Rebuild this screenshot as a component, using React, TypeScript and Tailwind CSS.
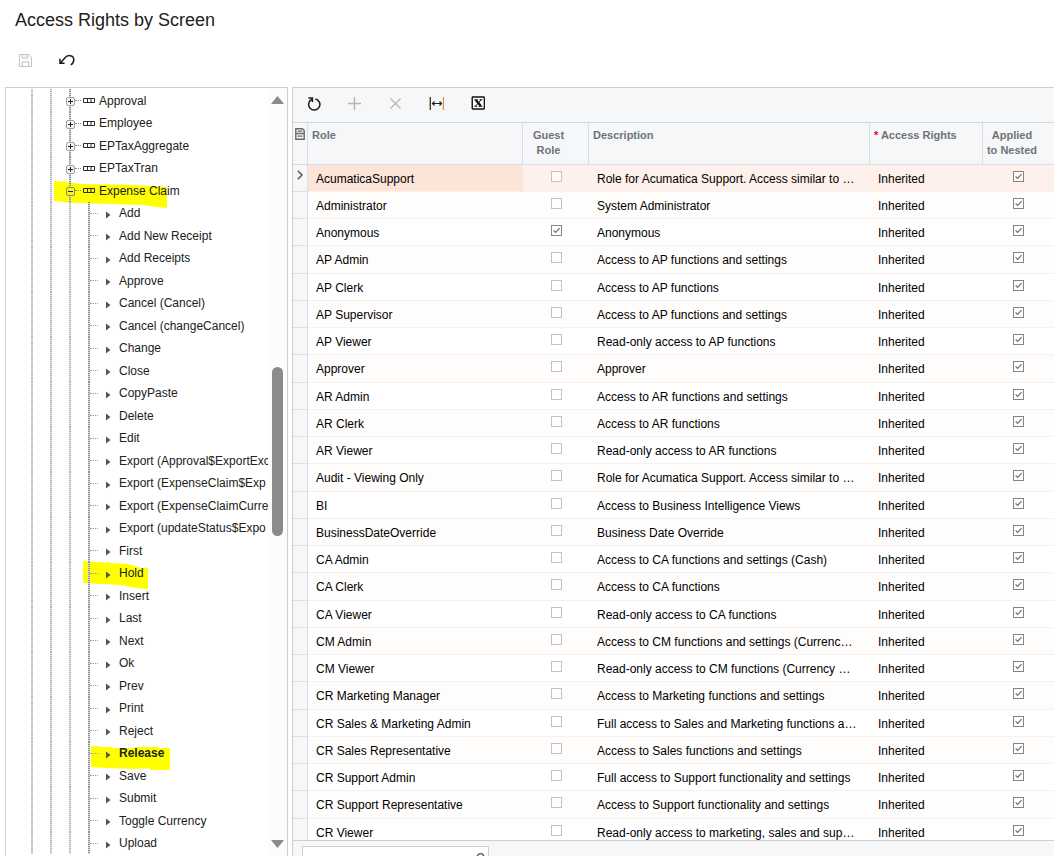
import React from 'react';

interface TreeItem {
  label: string;
  bold?: boolean;
}

interface RoleRow {
  role: string;
  guest?: boolean;
  description: string;
}

const SCREENS: string[] = ['Approval', 'Employee', 'EPTaxAggregate', 'EPTaxTran', 'Expense Claim'];

const ACTIONS: TreeItem[] = [
  { label: 'Add' },
  { label: 'Add New Receipt' },
  { label: 'Add Receipts' },
  { label: 'Approve' },
  { label: 'Cancel (Cancel)' },
  { label: 'Cancel (changeCancel)' },
  { label: 'Change' },
  { label: 'Close' },
  { label: 'CopyPaste' },
  { label: 'Delete' },
  { label: 'Edit' },
  { label: 'Export (Approval$ExportExc' },
  { label: 'Export (ExpenseClaim$Exp' },
  { label: 'Export (ExpenseClaimCurre' },
  { label: 'Export (updateStatus$Expo' },
  { label: 'First' },
  { label: 'Hold' },
  { label: 'Insert' },
  { label: 'Last' },
  { label: 'Next' },
  { label: 'Ok' },
  { label: 'Prev' },
  { label: 'Print' },
  { label: 'Reject' },
  { label: 'Release', bold: true },
  { label: 'Save' },
  { label: 'Submit' },
  { label: 'Toggle Currency' },
  { label: 'Upload' },
];

const ROLES: RoleRow[] = [
  { role: 'AcumaticaSupport', description: 'Role for Acumatica Support. Access similar to …' },
  { role: 'Administrator', description: 'System Administrator' },
  { role: 'Anonymous', guest: true, description: 'Anonymous' },
  { role: 'AP Admin', description: 'Access to AP functions and settings' },
  { role: 'AP Clerk', description: 'Access to AP functions' },
  { role: 'AP Supervisor', description: 'Access to AP functions and settings' },
  { role: 'AP Viewer', description: 'Read-only access to AP functions' },
  { role: 'Approver', description: 'Approver' },
  { role: 'AR Admin', description: 'Access to AR functions and settings' },
  { role: 'AR Clerk', description: 'Access to AR functions' },
  { role: 'AR Viewer', description: 'Read-only access to AR functions' },
  { role: 'Audit - Viewing Only', description: 'Role for Acumatica Support. Access similar to …' },
  { role: 'BI', description: 'Access to Business Intelligence Views' },
  { role: 'BusinessDateOverride', description: 'Business Date Override' },
  { role: 'CA Admin', description: 'Access to CA functions and settings (Cash)' },
  { role: 'CA Clerk', description: 'Access to CA functions' },
  { role: 'CA Viewer', description: 'Read-only access to CA functions' },
  { role: 'CM Admin', description: 'Access to CM functions and settings (Currenc…' },
  { role: 'CM Viewer', description: 'Read-only access to CM functions (Currency …' },
  { role: 'CR Marketing Manager', description: 'Access to Marketing functions and settings' },
  { role: 'CR Sales & Marketing Admin', description: 'Full access to Sales and Marketing functions a…' },
  { role: 'CR Sales Representative', description: 'Access to Sales functions and settings' },
  { role: 'CR Support Admin', description: 'Full access to Support functionality and settings' },
  { role: 'CR Support Representative', description: 'Access to Support functionality and settings' },
  { role: 'CR Viewer', description: 'Read-only access to marketing, sales and sup…' },
];

// Marker strokes behind the highlighted tree nodes, relative to the row's top left corner
const MARKERS: Record<string, { left: string; path: string }> = {
  'Expense Claim': {
    left: 'left-[48px]',
    path: 'M0 2 L14 3 L26 5 L78 6 L113 8 L113 29 L103 28 L88 26 L60 25 L20 24 L0 22 Z',
  },
  Hold: {
    left: 'left-[77px]',
    path: 'M0 -1 L30 1 L45 2 L58 6 L65 6 L65 27 L52 26 L38 23 L0 21 Z',
  },
  Release: {
    left: 'left-[85px]',
    path: 'M0 4 L8 4 L10 5 L20 5 L22 6 L42 6 L46 5 L66 5 L68 6 L79 6 L79 28 L60 28 L58 26 L44 27 L14 26 L0 25 Z',
  },
};

function Marker({ label }: { label: string }) {
  const marker = MARKERS[label];
  if (!marker) return null;
  return (
    <svg className={`absolute top-0 -z-10 overflow-visible ${marker.left}`} width="120" height="28" aria-hidden="true">
      <path d={marker.path} fill="#ffff00" />
    </svg>
  );
}

// Dotted vertical guide of one indent level
function Guide() {
  return (
    <span className="w-[19px] shrink-0 self-stretch">
      <span className="block h-full w-[2px] bg-[repeating-linear-gradient(to_bottom,#b4b4b4_0_1px,#e6e6e6_1px_2px)]" />
    </span>
  );
}

function ToggleIcon({ open }: { open: boolean }) {
  return (
    <svg width="9" height="9" viewBox="0 0 9 9" aria-hidden="true">
      <rect x=".5" y=".5" width="8" height="8" rx="1.5" fill={open ? '#f3f335' : '#f4f4f4'} stroke={open ? '#8f8f3c' : '#a0a0a0'} />
      <path d={open ? 'M2 4.5H7' : 'M2 4.5H7M4.5 2V7'} stroke="#222" strokeWidth="1" />
    </svg>
  );
}

function TableIcon() {
  return (
    <svg width="12" height="5" viewBox="0 0 12 5" aria-hidden="true">
      <path d="M.5 .5H11.5V4.5H.5ZM4.5 .5V4.5M8 .5V4.5" fill="none" stroke="#2c2c2c" />
    </svg>
  );
}

function ToolButton({ label, disabled, children }: { label: string; disabled?: boolean; children: React.ReactNode }) {
  return (
    <button type="button" aria-label={label} disabled={disabled} className="flex h-6 w-[41px] shrink-0 items-center justify-center">
      {children}
    </button>
  );
}

function CheckBox({ checked, label }: { checked?: boolean; label: string }) {
  return (
    <span className="relative mx-auto block size-[11px]">
      <input
        type="checkbox"
        aria-label={label}
        defaultChecked={checked}
        className="peer block size-[11px] appearance-none border border-[#c2c2c2] bg-white/60 checked:border-[#858585]"
      />
      <svg className="pointer-events-none absolute inset-0 hidden peer-checked:block" width="11" height="11" viewBox="0 0 11 11">
        <path d="M2.6 5.4L4.6 7.4L8.6 3.2" fill="none" stroke="#6e6e6e" strokeWidth="1.2" />
      </svg>
    </span>
  );
}

function Tree() {
  return (
    <nav aria-label="Screens" className="relative flex w-[283px] shrink-0 overflow-hidden border border-b-0 border-[#cfcfcf]">
      <ul className="isolate w-[262px] shrink-0 overflow-hidden pt-px text-xs text-[#212121]">
        {SCREENS.map((label, i) => (
          <li key={label} className="relative flex h-[22px] items-center pl-[25px] odd:h-[23px]">
            <Marker label={label} />
            <Guide />
            <Guide />
            <span className="relative flex w-[14px] shrink-0 items-center gap-1 self-stretch">
              <span className="h-full w-[2px] bg-[repeating-linear-gradient(to_bottom,#959595_0_1px,#d4d4d4_1px_2px)]" />
              <span className="w-[6px] border-t border-dotted border-[#8a8a8a]" />
              <span className="absolute top-2 -left-[3px]">
                <ToggleIcon open={i === SCREENS.length - 1} />
              </span>
            </span>
            <a href="#screen" className="flex items-center gap-1 whitespace-nowrap">
              <TableIcon />
              {label}
            </a>
          </li>
        ))}
        {ACTIONS.map(({ label, bold }) => (
          <li key={label} className="relative flex h-[23px] items-center pl-[25px] even:h-[22px]">
            <Marker label={label} />
            <Guide />
            <Guide />
            <Guide />
            <span className="w-[2px] shrink-0 self-stretch bg-[repeating-linear-gradient(to_bottom,#959595_0_1px,#d4d4d4_1px_2px)]" />
            <span className="w-2 shrink-0 border-t border-dotted border-[#9a9a9a]" />
            <svg className="mt-[3px] mr-2 ml-2 shrink-0" width="5" height="8" viewBox="0 0 5 8" aria-hidden="true">
              <path d="M0 .5L4.5 4L0 7.5Z" fill="#555" />
            </svg>
            <a href="#action" className={`whitespace-nowrap ${bold ? 'font-bold' : ''}`}>
              {label}
            </a>
          </li>
        ))}
      </ul>
      {/* Scroll bar */}
      <div className="flex flex-1 flex-col items-center bg-[#fcfcfc] pt-2 pb-2">
        <svg width="13" height="8" viewBox="0 0 13 8" aria-hidden="true">
          <path d="M0 8L6.5 0L13 8Z" fill="#8b8b8b" />
        </svg>
        <div className="grow-[263]" />
        <div className="w-[11px] grow-[169] rounded-full bg-[#8b8b8b]" />
        <div className="grow-[304]" />
        <svg width="13" height="8" viewBox="0 0 13 8" aria-hidden="true">
          <path d="M0 0L6.5 8L13 0Z" fill="#8b8b8b" />
        </svg>
      </div>
    </nav>
  );
}

function RolesTable() {
  const head = 'border-r border-b border-[#d9dce0] pt-[5px] align-top font-bold';
  const cell = 'border-b border-[#f8f0ec] pt-[6px] align-top';
  return (
    <table className="w-full table-fixed border-separate border-spacing-0 text-left text-xs text-black">
      <colgroup>
        <col className="w-[15px]" />
        <col className="w-[215px]" />
        <col className="w-[66px]" />
        <col />
        <col className="w-[113px]" />
        <col className="w-[71px]" />
      </colgroup>
      <thead className="bg-[#f5f7f9] text-[11px] leading-[15px] text-[#6f7377]">
        <tr className="h-[42px]">
          <th className={head} aria-label="Notes">
            <svg className="ml-[2px]" width="10" height="12" viewBox="0 0 10 12" fill="none" stroke="#6a6a6a" aria-hidden="true">
              <path d="M.8 5V.8H7.5L9.2 2.5V5M.8 6V11.2H9.2V6" strokeWidth="1.4" />
              <path d="M2.5 3.2H7.5M0 5.5H10M2.5 8.2H7.5" strokeWidth="1.3" />
            </svg>
          </th>
          <th className={`${head} pl-1`}>Role</th>
          <th className={`${head} pr-[14px] text-center`}>Guest Role</th>
          <th className={`${head} pl-1`}>Description</th>
          <th className={`${head} pl-1`}>
            <span className="text-red-600">*</span> Access Rights
          </th>
          <th className="border-b border-[#d9dce0] pt-[5px] pr-[13px] text-center align-top font-bold whitespace-nowrap">
            Applied
            <br />
            to Nested
          </th>
        </tr>
      </thead>
      <tbody>
        {ROLES.map((row, i) => (
          <tr
            key={row.role}
            className={`h-[27px] nth-[4n]:h-[28px] ${i === 0 ? 'bg-[#fef0ea]' : i % 2 ? 'bg-[#fffdfb]' : 'bg-white'}`}
          >
            <td className="border-r border-b border-[#dcdfe3] bg-[#f5f7f9] pt-[5px] align-top">
              {i === 0 && (
                <svg className="ml-1" width="6" height="10" viewBox="0 0 6 10" aria-hidden="true">
                  <path d="M.8 .8L5 5L.8 9.2" fill="none" stroke="#555" strokeWidth="1.5" />
                </svg>
              )}
            </td>
            <td className={`${cell} truncate pl-2 ${i === 0 ? 'bg-[#fce4d8]' : ''}`}>{row.role}</td>
            <td className={cell}>
              <CheckBox checked={row.guest} label={`Guest role: ${row.role}`} />
            </td>
            <td className={`${cell} truncate pl-2`}>{row.description}</td>
            <td className={`${cell} pl-2`}>Inherited</td>
            <td className={cell}>
              <CheckBox checked label={`Applied to nested: ${row.role}`} />
            </td>
          </tr>
        ))}
      </tbody>
    </table>
  );
}

export default function App() {
  return (
    <div className="flex h-screen flex-col overflow-hidden bg-white font-['Liberation_Sans',Arial,sans-serif] text-[#212121]">
      <header className="shrink-0">
        <h1 className="pt-2 pl-[15px] text-lg leading-6">Access Rights by Screen</h1>
        <div className="flex pt-4 pb-[15px] pl-[5px]">
          <ToolButton label="Save" disabled>
            <svg width="13" height="13" viewBox="0 0 14 14" fill="none" stroke="#bdbdbd" aria-hidden="true">
              <path d="M.5 .5H10.5L13.5 3.5V13.5H.5ZM3.5 .5V4.5H9.5V.5M3.5 13.5V8.5H10.5V13.5M7.5 1.5V3.5" />
            </svg>
          </ToolButton>
          <ToolButton label="Cancel">
            <svg width="16" height="12" viewBox="0 0 16 12" fill="none" stroke="#1c1c1c" strokeWidth="1.5" aria-hidden="true">
              <path d="M1 4.8V9.3H5.6M1.4 8.9L6 3.8C8.6 .4 14.8 .8 14.8 5.8C14.8 8 13.6 9.8 11.8 11" />
            </svg>
          </ToolButton>
        </div>
      </header>

      <main className="flex min-h-0 flex-1 gap-1 pl-[5px]">
        <Tree />
        <section className="flex min-w-0 flex-1 flex-col border-t border-l border-[#cfcfcf]">
          <div className="flex h-[35px] shrink-0 items-center border-b border-[#d5d8db] bg-[#f5f7f9] pb-1">
            <ToolButton label="Refresh">
              <svg width="14" height="15" viewBox="0 0 14 15" fill="none" stroke="#1c1c1c" strokeWidth="1.5" aria-hidden="true">
                <path d="M8.4 2.9A5.6 5.6 0 1 1 4.9 3.3" />
                <path d="M1.4 2H5.4V6" />
              </svg>
            </ToolButton>
            <ToolButton label="Add Row" disabled>
              <svg width="13" height="13" viewBox="0 0 13 13" stroke="#b5b7b9" strokeWidth="1.4" aria-hidden="true">
                <path d="M6.5 0V13M0 6.5H13" />
              </svg>
            </ToolButton>
            <ToolButton label="Delete Row" disabled>
              <svg width="11" height="11" viewBox="0 0 11 11" stroke="#b5b7b9" strokeWidth="1.3" aria-hidden="true">
                <path d="M.5 .5L10.5 10.5M10.5 .5L.5 10.5" />
              </svg>
            </ToolButton>
            <ToolButton label="Fit to Screen">
              <svg width="15" height="13" viewBox="0 0 15 13" fill="none" aria-hidden="true">
                <path d="M.5 0V13" stroke="#e0a862" />
                <path d="M1.5 0V13" stroke="#24404e" />
                <path d="M14.5 0V13" stroke="#d9913a" strokeWidth="1.4" />
                <path d="M3.5 6.5H12.5M5.5 4.5L3.5 6.5L5.5 8.5M10.5 4.5L12.5 6.5L10.5 8.5" stroke="#222" strokeWidth="1.2" />
              </svg>
            </ToolButton>
            <ToolButton label="Export to Excel">
              <svg width="14" height="14" viewBox="0 0 14 14" fill="none" stroke="#111" aria-hidden="true">
                <path d="M.4 1V13" stroke="#e6b877" strokeWidth=".8" />
                <rect x="1.3" y="1" width="12" height="12" rx=".5" fill="#fff" strokeWidth="1.3" />
                <path d="M4.8 4L9.8 10" strokeWidth="2.4" />
                <path d="M10.1 3.8L4.5 10.2M3.3 3.8H6.9M8.5 3.8H11.3M3.3 10.3H6.1M7.7 10.3H11.3" strokeWidth="1" />
              </svg>
            </ToolButton>
          </div>
          <div className="min-h-0 flex-1 overflow-hidden">
            <RolesTable />
          </div>
          {/* Filter bar */}
          <footer className="h-4 shrink-0 overflow-hidden border-t border-[#cfcfcf] bg-[#f5f7f9] pt-[5px] pl-[9px]">
            <div className="flex h-6 w-[187px] border border-[#cfcfcf] bg-white">
              <input type="text" aria-label="Search" className="min-w-0 flex-1 px-2 text-xs outline-none" />
              <svg className="mt-[6px] mr-[3px]" width="9" height="12" viewBox="0 0 9 12" fill="none" stroke="#555" strokeWidth="1.3" aria-hidden="true">
                <circle cx="4.5" cy="4" r="3.3" />
                <path d="M2.5 7L.5 10.5" />
              </svg>
            </div>
          </footer>
        </section>
      </main>
    </div>
  );
}
